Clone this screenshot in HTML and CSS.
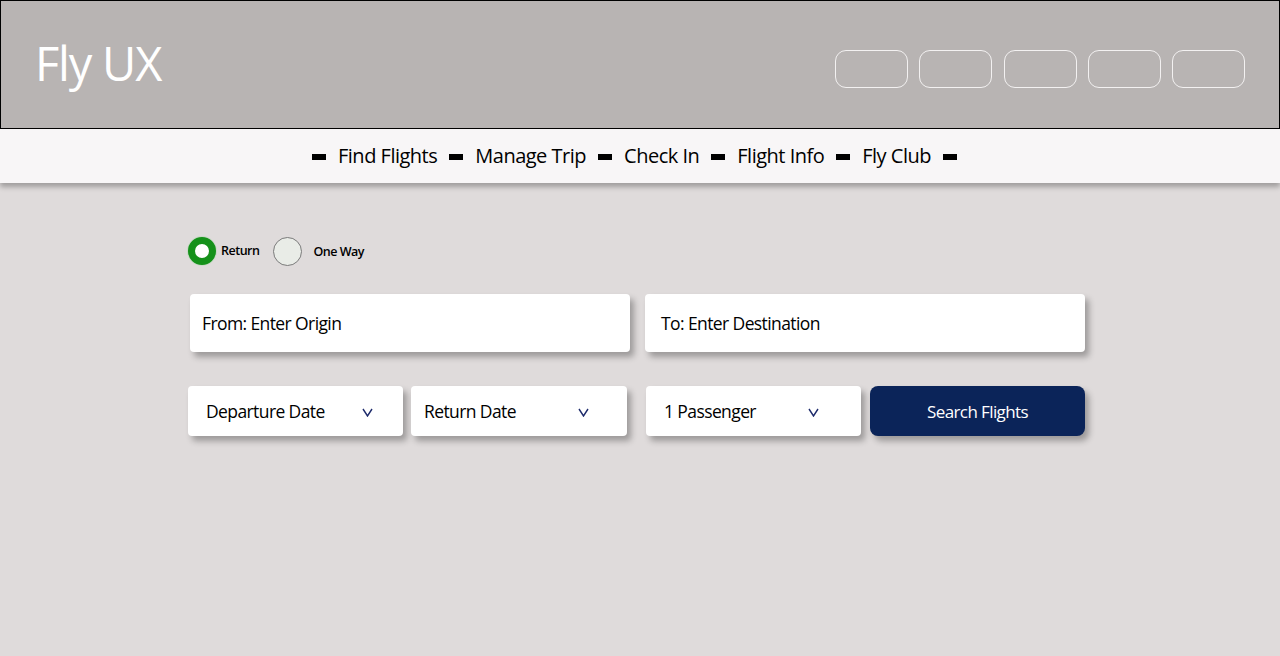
FILE: index.html
```html
<!DOCTYPE html>
<html lang="en">
<head>
<meta charset="utf-8">
<title>Fly UX</title>
<link rel="stylesheet" href="styles.css">
</head>
<body>
<header class="header">
  <h1 class="logo">Fly UX</h1>
  <div class="header-buttons">
    <span class="hbtn"></span>
    <span class="hbtn"></span>
    <span class="hbtn"></span>
    <span class="hbtn"></span>
    <span class="hbtn"></span>
  </div>
</header>
<nav class="nav">
  <span class="dash"></span>
  <a class="nav-link">Find Flights</a>
  <span class="dash"></span>
  <a class="nav-link">Manage Trip</a>
  <span class="dash"></span>
  <a class="nav-link">Check In</a>
  <span class="dash"></span>
  <a class="nav-link">Flight Info</a>
  <span class="dash"></span>
  <a class="nav-link">Fly Club</a>
  <span class="dash"></span>
</nav>
<main class="main">
  <div class="trip-type">
    <label class="radio"><span class="radio-dot radio-on"></span><span class="radio-label">Return</span></label>
    <label class="radio"><span class="radio-dot radio-off"></span><span class="radio-label radio-label-far">One Way</span></label>
  </div>
  <div class="row-places">
    <div class="field field-from">From: Enter Origin</div>
    <div class="field field-to">To: Enter Destination</div>
  </div>
  <div class="row-options">
    <div class="select select-dep"><span>Departure Date</span><svg class="chev" width="11" height="9" viewBox="0 0 11 9"><path d="M1 1 L5.5 8 L10 1" fill="none" stroke="#1d2a6b" stroke-width="1.4"/></svg></div>
    <div class="select select-ret"><span>Return Date</span><svg class="chev" width="11" height="9" viewBox="0 0 11 9"><path d="M1 1 L5.5 8 L10 1" fill="none" stroke="#1d2a6b" stroke-width="1.4"/></svg></div>
    <div class="select select-pass"><span>1 Passenger</span><svg class="chev" width="11" height="9" viewBox="0 0 11 9"><path d="M1 1 L5.5 8 L10 1" fill="none" stroke="#1d2a6b" stroke-width="1.4"/></svg></div>
    <button class="search">Search Flights</button>
  </div>
</main>
</body>
</html>
```
FILE: styles.css
```css
* { box-sizing: border-box; }
html, body { margin: 0; padding: 0; }
body {
  width: 1280px;
  height: 656px;
  overflow: hidden;
  background: #dfdbdb;
  font-family: "Open Sans", "Noto Sans", sans-serif;
  color: #000;
}
.header {
  height: 129px;
  background: #b8b4b3;
  border: 1px solid #000;
  display: flex;
  align-items: flex-start;
  justify-content: space-between;
  padding: 0 34px 0 34px;
}
.logo {
  margin: 30px 0 0;
  font-size: 47px;
  font-weight: 400;
  color: #fff;
  letter-spacing: -1.2px;
  line-height: 64px;
}
.header-buttons {
  display: flex;
  gap: 11.25px;
  margin-top: 49px;
}
.hbtn {
  display: block;
  width: 73px;
  height: 38px;
  border: 1.5px solid #f3f1f1;
  border-radius: 11px;
}
.nav {
  height: 54px;
  background: #f8f6f7;
  display: flex;
  align-items: center;
  justify-content: center;
  gap: 12px;
  padding-right: 11px;
  box-shadow: 0 4px 5px rgba(0,0,0,0.28);
  position: relative;
}
.dash {
  display: block;
  width: 14px;
  height: 6px;
  background: #000;
  margin-top: 2px;
}
.nav-link {
  font-size: 20px;
  letter-spacing: -0.5px;
  color: #000;
  margin-top: -2px;
}
.main {
  padding: 54px 0 0 188px;
}
.trip-type {
  display: flex;
  align-items: center;
  height: 28px;
}
.radio {
  display: flex;
  align-items: center;
}
.radio-dot {
  display: block;
  border-radius: 50%;
}
.radio-on {
  width: 28px;
  height: 28px;
  background: #fff;
  border: 7.5px solid #15911a;
  box-shadow: 0 0 0 1px #c9d9c7;
}
.radio-off {
  width: 29px;
  height: 29px;
  background: #e9ece7;
  border: 1px solid #7a7a7a;
  margin-left: 14px;
}
.radio-label {
  font-size: 12.5px;
  font-weight: 600;
  letter-spacing: -0.5px;
  margin-left: 5px;
  margin-top: -2px;
}
.radio-label-far { margin-left: 11px; margin-top: 1px; }
.row-places {
  display: flex;
  gap: 15px;
  margin-top: 29px;
  padding-left: 2px;
}
.field {
  width: 440px;
  height: 58px;
  background: #fff;
  border-radius: 4px;
  box-shadow: 4px 5px 6px rgba(0,0,0,0.3);
  display: flex;
  align-items: center;
  font-size: 17.5px;
  letter-spacing: -0.6px;
}
.field-from { padding-left: 12px; }
.field-to { padding-left: 16px; }
.row-options {
  display: flex;
  margin-top: 34px;
}
.select {
  width: 215px;
  height: 50px;
  background: #fff;
  border-radius: 4px;
  box-shadow: 4px 5px 6px rgba(0,0,0,0.3);
  display: flex;
  align-items: center;
  justify-content: space-between;
  font-size: 17.5px;
  letter-spacing: -0.6px;
}
.chev { margin-top: 2px; }
.select-dep { padding: 0 30px 0 18px; }
.select-ret { width: 216px; margin-left: 8px; padding: 0 38px 0 13px; }
.select-pass { margin-left: 19px; padding: 0 42px 0 18px; }
.search {
  width: 215px;
  height: 50px;
  margin-left: 9px;
  background: #0b2459;
  color: #fff;
  border: none;
  border-radius: 8px;
  box-shadow: 4px 5px 6px rgba(0,0,0,0.3);
  font-family: inherit;
  font-size: 17px;
  letter-spacing: -0.6px;
  padding: 0;
}
```
